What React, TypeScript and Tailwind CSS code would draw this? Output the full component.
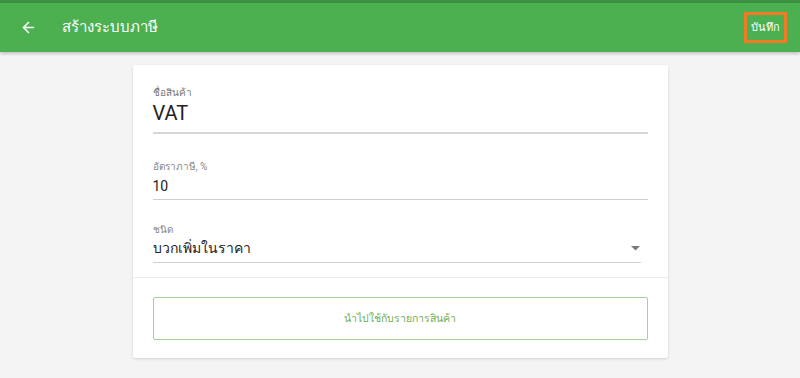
import { ArrowLeft } from "lucide-react";

export default function App() {
  return (
    <div className="min-h-[378px] bg-[#f4f4f4] font-['Roboto','Noto_Sans',sans-serif]">
      <header className="h-[52px] bg-[#4caf50] border-t-[3px] border-[#3d8f40] shadow-[0_2px_3px_rgba(0,0,0,0.2)] flex items-center px-[20px] text-white">
        <ArrowLeft className="w-[17px] h-[17px]" strokeWidth={2.2} />
        <h1 className="ml-[25px] text-[15px] leading-none">สร้างระบบภาษี</h1>
        <button className="ml-auto mr-[-7px] border-[3px] border-[#f07b24] w-[43px] h-[31px] text-[11px] leading-none flex items-center justify-center">
          บันทึก
        </button>
      </header>

      <main className="flex justify-center pt-[13px]">
        <div className="w-[535px] h-[293px] bg-white rounded-[2px] shadow-[0_1px_3px_rgba(0,0,0,0.15)] flex flex-col">
          <div className="px-[20px] pt-[20px] h-[212px]">
            <div className="h-[14px] flex items-center text-[10px] text-[#777]">ชื่อสินค้า</div>
            <div className="h-[24px] mt-[2px] flex items-center text-[20px] text-[#222]">VAT</div>
            <div className="h-[2px] bg-[#d6d6d6] mt-[7px]" />

            <div className="h-[14px] mt-[25px] flex items-center text-[10px] text-[#888]">อัตราภาษี, %</div>
            <div className="h-[20px] mt-[3px] flex items-center text-[14px] text-[#222]">10</div>
            <div className="h-[1px] bg-[#cfcfcf] mt-[3px]" />

            <div className="h-[14px] mt-[22px] flex items-center text-[10px] text-[#888]">ชนิด</div>
            <div className="h-[20px] mt-[2px] pr-[7px] flex items-center justify-between">
              <span className="text-[14px] text-[#222]">บวกเพิ่มในราคา</span>
              <svg width="9" height="5" viewBox="0 0 9 5" className="mr-[1px]">
                <path d="M0 0 L9 0 L4.5 4.5 Z" fill="#7a7a7a" />
              </svg>
            </div>
            <div className="h-[1px] bg-[#cfcfcf] mt-[4px] mr-[7px]" />
          </div>
          <div className="h-[1px] bg-[#ececec]" />
          <div className="px-[20px] pt-[19px]">
            <button className="w-full h-[43px] border border-[#a8cf97] rounded-[2px] text-[10.5px] text-[#6fae52]">
              นำไปใช้กับรายการสินค้า
            </button>
          </div>
        </div>
      </main>
    </div>
  );
}
